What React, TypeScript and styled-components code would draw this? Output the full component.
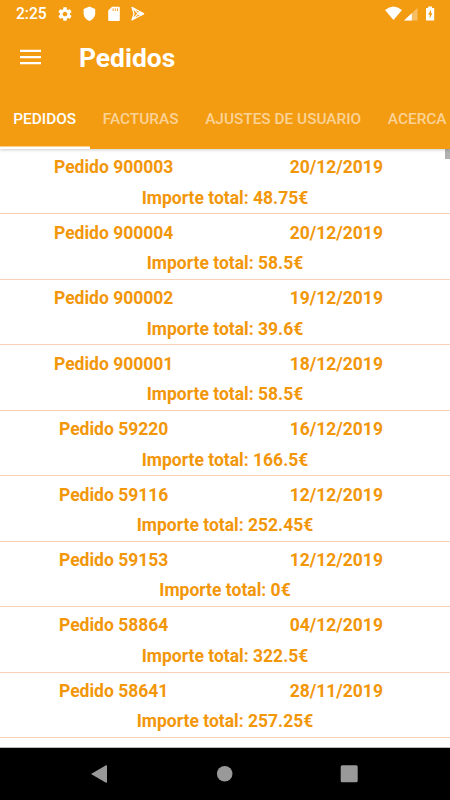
import React from 'react';
import styled, { createGlobalStyle } from 'styled-components';

const GlobalStyle = createGlobalStyle`
  *, *::before, *::after { box-sizing: border-box; }
  html, body { margin: 0; padding: 0; overflow: hidden; }
  body { font-family: Roboto, sans-serif; background: #fff; }
`;

const Screen = styled.div`
  width: 450px;
  height: 800px;
  display: flex;
  flex-direction: column;
  overflow: hidden;
  background: #fff;
`;

const Header = styled.header`
  flex: none;
  height: 149px;
  background: #f39c12;
  color: #fff;
  position: relative;
  z-index: 1;
  box-shadow: 0 1px 3px rgba(0, 0, 0, 0.2);
`;

const StatusBar = styled.div`
  height: 27px;
  display: flex;
  align-items: center;
  padding: 0 15px 0 16px;
`;

const Clock = styled.span`
  width: 41px;
  padding-top: 1px;
  font-size: 15.6px;
  font-weight: 500;
  line-height: 27px;
`;

const Notifications = styled.div`
  display: flex;
  align-items: center;
  gap: 8.4px;
  flex: 1;
`;

const Signals = styled.div`
  display: flex;
  align-items: center;
`;

const Icon = styled.svg`
  display: block;
  flex: none;
`;

const TitleBar = styled.div`
  height: 61px;
  display: flex;
  align-items: center;
  padding-left: 17px;
`;

const Title = styled.h1`
  margin: 0 0 0 35px;
  font-size: 26.4px;
  line-height: 32px;
  font-weight: 700;
`;

const Tabs = styled.nav`
  height: 61px;
  display: flex;
  overflow: hidden;
`;

const Tab = styled.div<{ $active?: boolean }>`
  flex: none;
  height: 61px;
  padding: 0 13.3px;
  line-height: 62px;
  font-size: 15.4px;
  font-weight: 500;
  white-space: nowrap;
  color: ${p => (p.$active ? '#fff' : '#fbd296')};
  box-shadow: ${p => (p.$active ? 'inset 0 -2.5px #fff' : 'none')};
`;

const List = styled.main`
  flex: 1;
  min-height: 0;
  overflow: hidden;
  position: relative;
  border-bottom: 1px solid #bbb;
`;

const ScrollThumb = styled.div`
  position: absolute;
  top: 0;
  right: 0;
  width: 5px;
  height: 10px;
  background: #b1b1b1;
`;

const Order = styled.article`
  height: 65.45px;
  padding: 3.4px 2.4px 0 2.4px;
  border-bottom: 1px solid #f8d0b8;
  color: #f2960a;
  font-size: 17.5px;
  font-weight: 700;
  line-height: 30.4px;
  text-align: center;
`;

const OrderHeading = styled.div`
  display: grid;
  grid-template-columns: 1fr 1fr;
`;

const Total = styled.div``;

const NavBar = styled.footer`
  flex: none;
  height: 52px;
  background: #000;
  display: flex;
  align-items: center;
  justify-content: space-between;
  padding: 0 91px 0 89px;
`;

const orders = [
  ['900003', '20/12/2019', '48.75'],
  ['900004', '20/12/2019', '58.5'],
  ['900002', '19/12/2019', '39.6'],
  ['900001', '18/12/2019', '58.5'],
  ['59220', '16/12/2019', '166.5'],
  ['59116', '12/12/2019', '252.45'],
  ['59153', '12/12/2019', '0'],
  ['58864', '04/12/2019', '322.5'],
  ['58641', '28/11/2019', '257.25'],
];

const tabs = ['PEDIDOS', 'FACTURAS', 'AJUSTES DE USUARIO', 'ACERCA'];

export default function App() {
  return (
    <>
      <GlobalStyle />
      <Screen>
        <Header>
          <StatusBar>
            <Clock>2:25</Clock>
            <Notifications>
              <Icon width="16" height="16" viewBox="0 0 24 24" fill="#fff">
                <path d="M19.43 12.98c.04-.32.07-.64.07-.98s-.03-.66-.07-.98l2.11-1.65c.19-.15.24-.42.12-.64l-2-3.46c-.12-.22-.39-.3-.61-.22l-2.49 1c-.52-.4-1.08-.73-1.69-.98l-.38-2.65C14.46 2.18 14.25 2 14 2h-4c-.25 0-.46.18-.49.42l-.38 2.65c-.61.25-1.17.59-1.69.98l-2.49-1c-.23-.09-.49 0-.61.22l-2 3.46c-.13.22-.07.49.12.64l2.11 1.65c-.04.32-.07.65-.07.98s.03.66.07.98l-2.11 1.65c-.19.15-.24.42-.12.64l2 3.46c.12.22.39.3.61.22l2.49-1c.52.4 1.08.73 1.69.98l.38 2.65c.03.24.24.42.49.42h4c.25 0 .46-.18.49-.42l.38-2.65c.61-.25 1.17-.59 1.69-.98l2.49 1c.23.09.49 0 .61-.22l2-3.46c.12-.22.07-.49-.12-.64l-2.11-1.65zM12 15.5c-1.93 0-3.5-1.57-3.5-3.5s1.57-3.5 3.5-3.5 3.5 1.57 3.5 3.5-1.57 3.5-3.5 3.5z" />
              </Icon>
              <Icon width="16" height="16" viewBox="0 0 16 16" fill="#fff">
                <path d="M8.4 .6L14.2 3V7.3C14.2 11 11.6 13.8 8.4 15C5.2 13.8 2.6 11 2.6 7.3V3Z" />
              </Icon>
              <Icon width="16" height="16" viewBox="0 0 16 16">
                <path d="M6 .8H12.8Q13.8 .8 13.8 1.8V14Q13.8 15 12.8 15H3.2Q2.2 15 2.2 14V4.6Z" fill="#fff" />
                <path d="M7.1 2.4V5M9.3 2.4V5M11.5 2.4V5" stroke="#f39c12" strokeWidth="0.9" />
              </Icon>
              <Icon width="16" height="16" viewBox="0 0 16 16" fill="none" stroke="#fff" strokeWidth="1.2" strokeLinejoin="round">
                <path d="M2 1.4L13.6 7.7L2 14L4 7.7ZM2 1.4L10 9.7M2 14L10 5.7" />
                <path d="M9 7.7L10.7 6.2L13.6 7.7L10.7 9.2Z" fill="#fff" />
              </Icon>
            </Notifications>
            <Signals>
              <Icon width="50" height="16" viewBox="0 0 50 16">
                <path d="M0 4Q8.5-3 17 4L8.5 14Z" fill="#fff" />
                <path d="M32.5 2V14.5H19Z" fill="#fff" fillOpacity=".35" />
                <path d="M26.8 7.3V14.5H19Z" fill="#fff" />
                <path d="M43.2 .5H47V2H49.2V14.5H41V2H43.2Z" fill="#fff" />
                <path d="M46 3.8L43.1 8.6H44.7V12.5L47.4 7.3H46Z" fill="#f39c12" />
              </Icon>
            </Signals>
          </StatusBar>
          <TitleBar>
            <Icon width="27" height="26" viewBox="0 0 27 26" fill="#fff">
              <path d="M3 4.8H24V7.1H3ZM3 11H24V13.3H3ZM3 17H24V19.3H3Z" />
            </Icon>
            <Title>Pedidos</Title>
          </TitleBar>
          <Tabs>
            {tabs.map((label, i) => (
              <Tab key={label} $active={i === 0}>{label}</Tab>
            ))}
          </Tabs>
        </Header>
        <List>
          {orders.map(([id, date, total]) => (
            <Order key={id}>
              <OrderHeading>
                <span>Pedido {id}</span>
                <span>{date}</span>
              </OrderHeading>
              <Total>Importe total: {total}€</Total>
            </Order>
          ))}
          <ScrollThumb />
        </List>
        <NavBar>
          <Icon width="20" height="20" viewBox="0 0 20 20" fill="#999">
            <path d="M2 10L17 1.3Q18 1 18 2V18Q18 19 17 18.7Z" />
          </Icon>
          <Icon width="20" height="20" viewBox="0 0 20 20" fill="#999">
            <circle cx="10.7" cy="9.8" r="7.8" />
          </Icon>
          <Icon width="20" height="20" viewBox="0 0 20 20" fill="#999">
            <rect x="1.7" y="1.2" width="17" height="17" rx="1.5" />
          </Icon>
        </NavBar>
      </Screen>
    </>
  );
}
